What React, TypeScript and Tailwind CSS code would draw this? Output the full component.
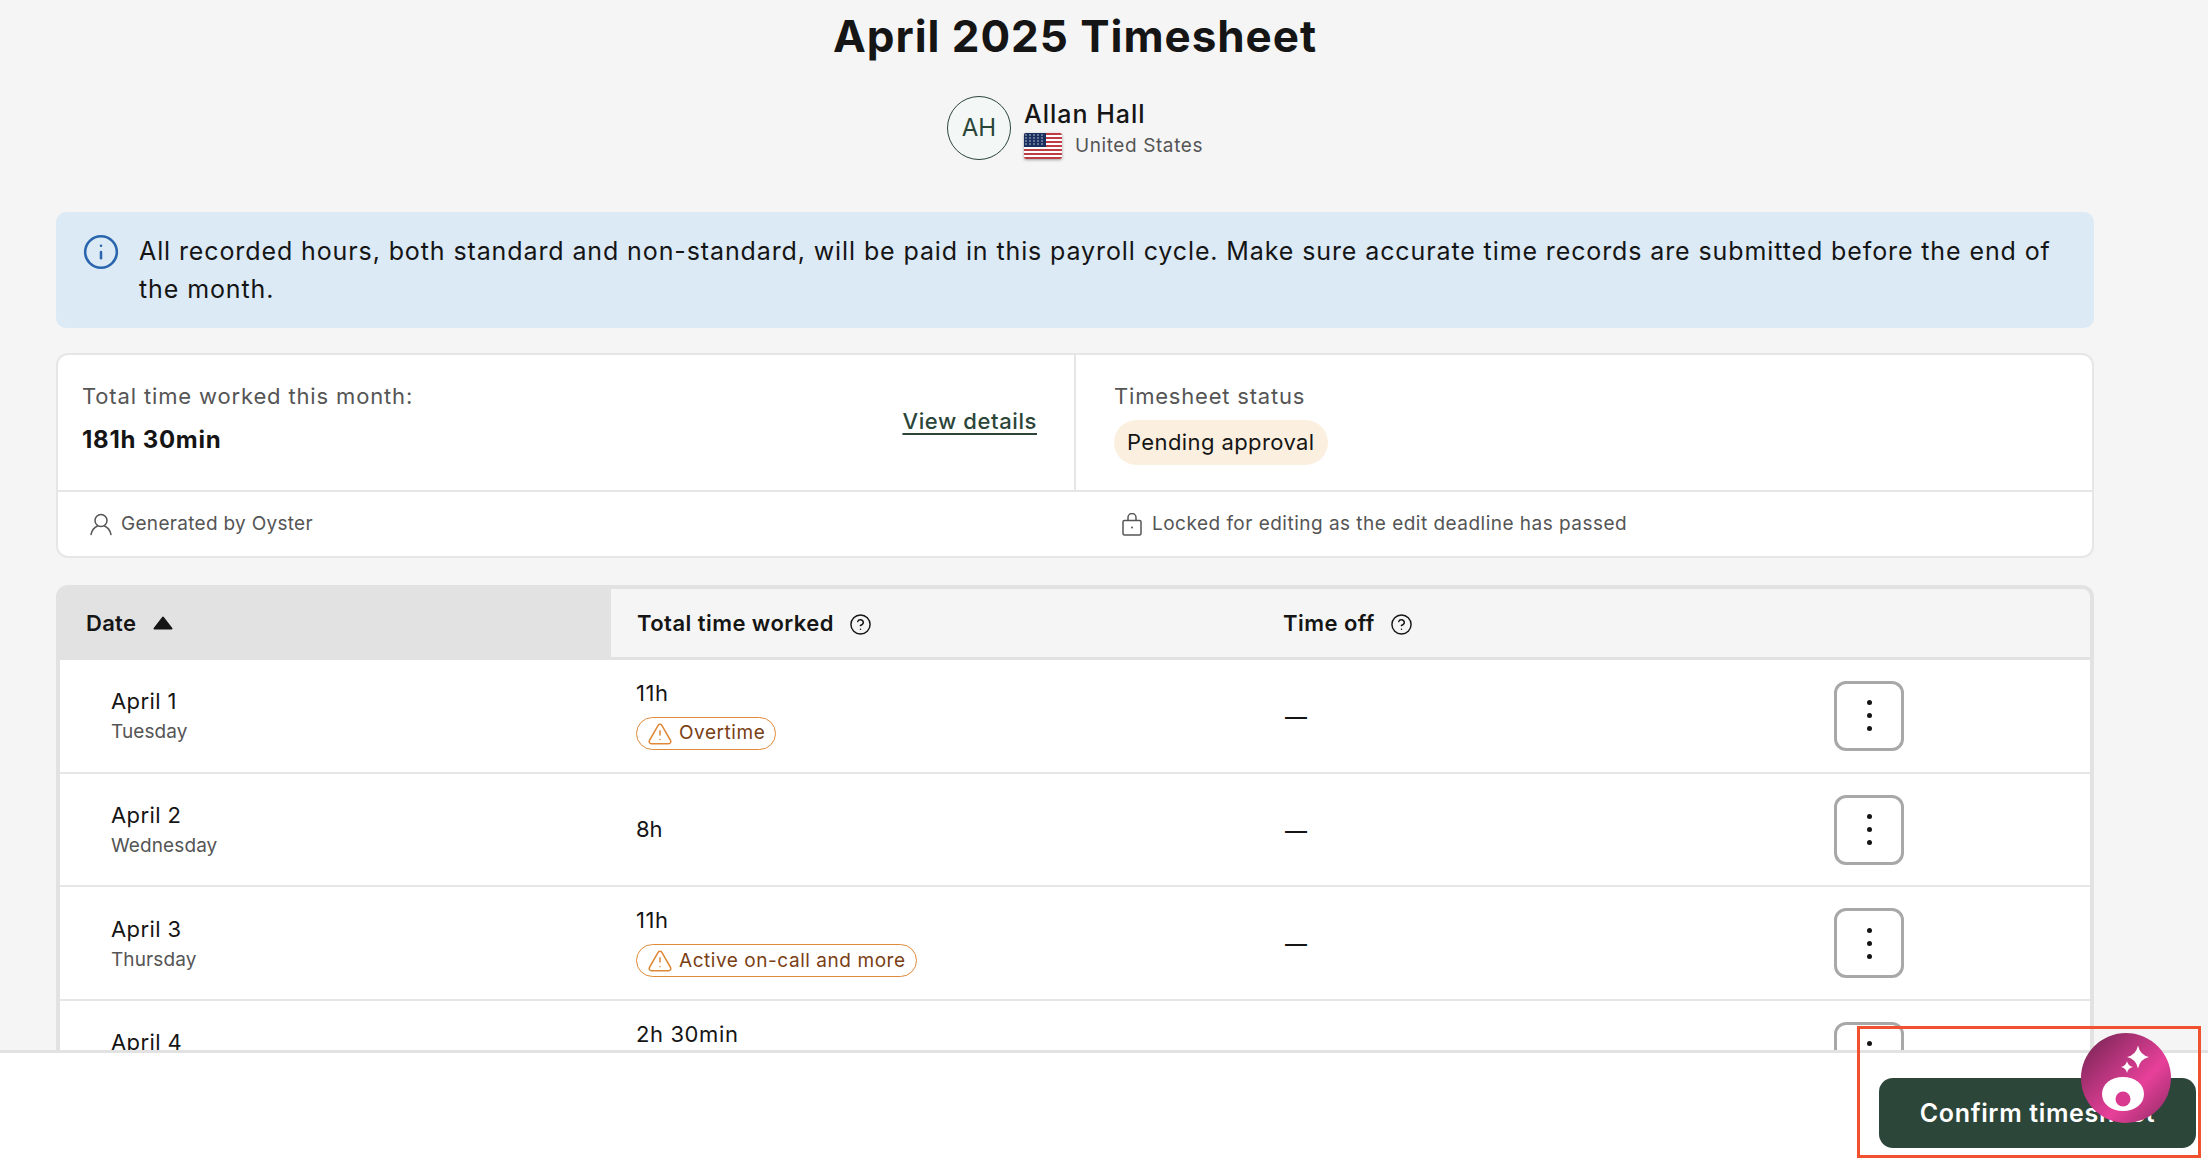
import { CircleHelp, Info, TriangleAlert } from 'lucide-react';

const rows = [
  { date: 'April 1', day: 'Tuesday', total: '11h', badge: 'Overtime' },
  { date: 'April 2', day: 'Wednesday', total: '8h' },
  { date: 'April 3', day: 'Thursday', total: '11h', badge: 'Active on-call and more' },
  { date: 'April 4', day: 'Friday', total: '2h 30min', clipped: true },
];

function UsFlag() {
  const stripes = [0, 4, 8, 12, 16, 20, 24];
  return (
    <svg width="38" height="26" viewBox="0 0 38 26" className="rounded-[2px] shadow-[0_1px_3px_rgba(0,0,0,0.35)]">
      <rect width="38" height="26" fill="#fff" />
      {stripes.map((y) => (
        <rect key={y} y={y} width="38" height="2" fill="#bd3d44" />
      ))}
      <rect width="22" height="14" fill="#192f5d" />
      {[2, 5, 8, 11].map((y) =>
        [2, 6, 10, 14, 18].map((x) => <circle key={`${x}-${y}`} cx={x} cy={y} r="0.8" fill="#c9d0e0" />)
      )}
    </svg>
  );
}

function UserIcon() {
  return (
    <svg width="22" height="24" viewBox="0 0 22 24" fill="none" stroke="#555" strokeWidth="1.5">
      <circle cx="11" cy="8.5" r="6" />
      <path d="M1 22.5c1-4.5 4-7.5 6.5-8.500M21 22.500c-1-4.500-4-7.500-6.500-8.500" strokeLinecap="round" />
    </svg>
  );
}

function LockIcon() {
  return (
    <svg width="20" height="23" viewBox="0 0 20 23" fill="none" stroke="#555" strokeWidth="1.5">
      <rect x="1" y="7.5" width="18" height="14.5" rx="1.5" />
      <path d="M6 7.5V4.5a4 4 0 0 1 8 0v3" />
      <circle cx="10" cy="14.5" r="1" fill="#555" stroke="none" />
    </svg>
  );
}

function Badge({ label }: { label: string }) {
  return (
    <div className="flex h-[33px] w-fit items-center gap-[6px] rounded-full border border-[#df8a3a] bg-white pl-[10px] pr-[10px]">
      <TriangleAlert className="h-[26px] w-[26px] text-[#df8a3a]" strokeWidth={1.4} />
      <span className="text-[19px] tracking-[0.55px] text-[#7a4015]">{label}</span>
    </div>
  );
}

function MenuButton() {
  return (
    <div className="flex h-[70px] w-[70px] flex-col items-center justify-center gap-[8px] rounded-[12px] border-[3px] border-[#a8a8a8] bg-white">
      <span className="h-[5px] w-[5px] rounded-full bg-[#151515]" />
      <span className="h-[5px] w-[5px] rounded-full bg-[#151515]" />
      <span className="h-[5px] w-[5px] rounded-full bg-[#151515]" />
    </div>
  );
}

export default function App() {
  return (
    <div className="relative flex h-[1170px] w-[2208px] flex-col overflow-hidden bg-[#f5f5f5] font-[Inter,sans-serif] text-[#151515]">
      <main className="h-[1050px] shrink-0 overflow-hidden pl-[56px] pr-[114px]">
        {/* Header */}
        <h1 className="flex h-[72px] items-center justify-center text-[44px] font-bold tracking-[0.95px]">
          April 2025 Timesheet
        </h1>
        <div className="mt-[24px] flex h-[64px] justify-center gap-[13px]">
          <div className="flex h-[64px] w-[64px] items-center justify-center rounded-full border border-[#2b4539] bg-[#f3f8f6] text-[24px] text-[#2b4539]">
            AH
          </div>
          <div className="pt-[1px]">
            <div className="text-[25px] font-medium leading-[34px] tracking-[1px]">Allan Hall</div>
            <div className="mt-[1px] flex items-center gap-[13px]">
              <UsFlag />
              <span className="text-[19px] tracking-[0.6px] text-[#555]">United States</span>
            </div>
          </div>
        </div>

        {/* Info banner */}
        <div className="mt-[52px] flex h-[116px] gap-[19px] rounded-[10px] bg-[#dceaf5] pl-[26px] pr-[36px] pt-[20px]">
          <Info className="mt-[1px] h-[38px] w-[38px] shrink-0 text-[#2a66ae]" strokeWidth={1.6} />
          <p className="text-[25px] leading-[38px] tracking-[0.89px]">
            All recorded hours, both standard and non-standard, will be paid in this payroll cycle. Make sure accurate
            time records are submitted before the end of the month.
          </p>
        </div>

        {/* Summary card */}
        <div className="mt-[25px] h-[205px] rounded-[12px] border-2 border-[#e6e6e6] bg-white">
          <div className="grid h-[137px] grid-cols-[1018px_1fr] border-b-2 border-[#e6e6e6]">
            <div className="flex items-center justify-between border-r-2 border-[#e6e6e6] pl-[24px] pr-[37px]">
              <div className="self-start pt-[26px]">
                <div className="text-[22px] leading-[30px] tracking-[0.85px] text-[#555]">
                  Total time worked this month:
                </div>
                <div className="mt-[14px] text-[24px] font-bold leading-[30px] tracking-[0.75px]">181h 30min</div>
              </div>
              <a className="mb-[2px] text-[22px] font-medium tracking-[0.6px] text-[#2b4539] underline decoration-2 underline-offset-4">
                View details
              </a>
            </div>
            <div className="pl-[38px] pt-[26px]">
              <div className="text-[22px] leading-[30px] tracking-[0.8px] text-[#555]">Timesheet status</div>
              <div className="mt-[9px] flex h-[45px] w-fit items-center rounded-full bg-[#fbf0e0] px-[13px] text-[22px] tracking-[0.4px]">
                Pending approval
              </div>
            </div>
          </div>
          <div className="grid h-[64px] grid-cols-[1018px_1fr] items-center text-[19px] text-[#555]">
            <div className="flex items-center gap-[9px] pl-[32px] tracking-[0.3px]">
              <UserIcon />
              Generated by Oyster
            </div>
            <div className="flex items-center gap-[10px] pl-[46px] tracking-[0.48px]">
              <LockIcon />
              Locked for editing as the edit deadline has passed
            </div>
          </div>
        </div>

        {/* Table */}
        <div className="mt-[27px] rounded-t-[12px] border-x-[4px] border-t-[4px] border-[#e2e2e2]">
          <div className="grid h-[71px] grid-cols-[551px_646px_1fr] border-b-[3px] border-[#e2e2e2] text-[22px] font-semibold">
            <div className="flex items-center gap-[17px] bg-[#e2e2e2] pl-[26px] tracking-[0.3px]">
              Date
              <svg width="20" height="14" viewBox="0 0 20 14">
                <path d="M10 1.5 18.500 12.500H1.500Z" fill="#151515" stroke="#151515" strokeWidth="2" strokeLinejoin="round" />
              </svg>
            </div>
            <div className="flex items-center gap-[15px] pl-[26px] tracking-[0.45px]">
              Total time worked
              <CircleHelp className="mt-[2px] h-[23px] w-[23px]" strokeWidth={1.5} />
            </div>
            <div className="flex items-center gap-[15px] pl-[26px] tracking-[0.45px]">
              Time off
              <CircleHelp className="mt-[2px] h-[23px] w-[23px]" strokeWidth={1.5} />
            </div>
          </div>
          {rows.map((row) => (
            <div
              key={row.date}
              className="grid h-[113.7px] grid-cols-[551px_646px_553px_1fr] border-b-2 border-[#e6e6e6] bg-white"
            >
              <div className="flex flex-col justify-center pl-[51px] pt-[2px]">
                <div className="text-[22px] leading-[30px] tracking-[0.4px]">{row.date}</div>
                <div className="mt-[1px] text-[19px] leading-[30px] tracking-[0.1px] text-[#555]">{row.day}</div>
              </div>
              {row.badge || row.clipped ? (
                <div className="pl-[25px] pt-[19px]">
                  <div className="text-[22px] leading-[28px] tracking-[0.6px]">{row.total}</div>
                  {row.badge && (
                    <div className="mt-[10px]">
                      <Badge label={row.badge} />
                    </div>
                  )}
                </div>
              ) : (
                <div className="flex items-center pl-[25px] text-[22px]">{row.total}</div>
              )}
              <div className="flex items-center pl-[28px] pt-[3px] text-[22px] font-medium">—</div>
              <div className="flex items-center pl-[24px]">
                <MenuButton />
              </div>
            </div>
          ))}
        </div>
      </main>

      {/* Footer */}
      <footer className="flex flex-1 items-start justify-end border-t-[3px] border-[#e2e2e2] bg-white pr-[12px] pt-[25px]">
        <button className="flex h-[70px] w-[317px] items-center justify-center rounded-[14px] bg-[#2c4639] pt-[2px] text-[25px] font-semibold tracking-[0.65px] text-white">
          Confirm timesheet
        </button>
      </footer>

      {/* Highlight box */}
      <div className="absolute left-[1857px] top-[1026px] h-[132px] w-[344px] border-[3px] border-[#f2512f]" />

      {/* Assistant bubble */}
      <div className="absolute left-[2081px] top-[1033px] h-[90px] w-[90px] rounded-full bg-[linear-gradient(135deg,#8a2a60_14%,#e8409a_62%,#8a2a60_100%)]">
        <svg width="90" height="90" viewBox="0 0 90 90">
          <path d="M57 12.500Q59 22 68 24Q59 26 57 35.500Q55 26 46 24Q55 22 57 12.500Z" fill="#fff" />
          <path d="M46 28Q47 33 52 34Q47 35 46 40Q45 35 40 34Q45 33 46 28Z" fill="#fff" />
          <path d="M42 44c12 0 21 7 21 17 0 10-9 17-21 17S21 71 21 61c0-10 9-17 21-17Z" fill="#fff" />
          <circle cx="42" cy="66" r="7.500" fill="#d93a8f" />
        </svg>
      </div>
    </div>
  );
}
